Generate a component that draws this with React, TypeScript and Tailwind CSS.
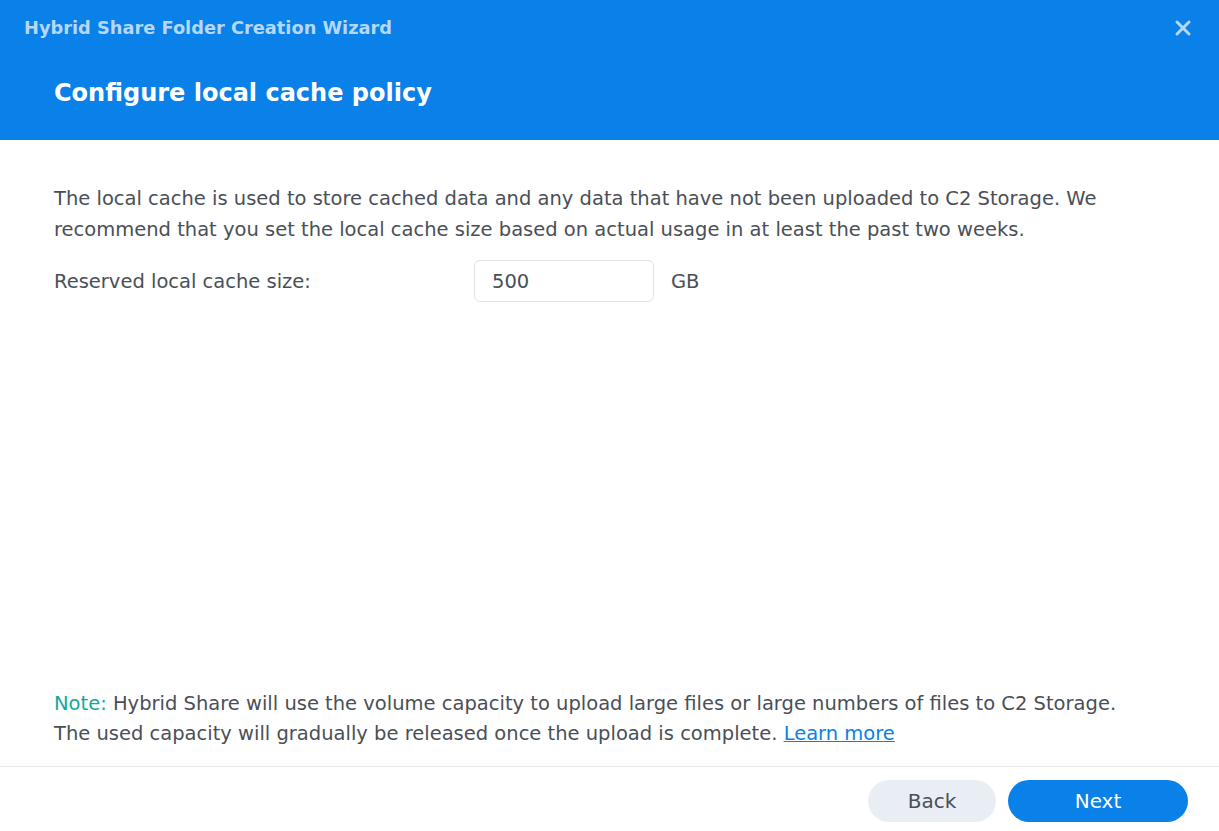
import { X } from 'lucide-react'

export default function App() {
  return (
    <div
      className="flex h-[831px] w-[1219px] flex-col bg-white text-[#4a4f57]"
      style={{ fontFamily: '"DejaVu Sans", Verdana, sans-serif' }}
    >
      {/* Header */}
      <div className="flex h-[140px] shrink-0 flex-col bg-[#0a80e9] px-6">
        <div className="flex h-[56px] items-center justify-between">
          <span className="text-[17.8px] font-bold text-[#b5d8f8]">Hybrid Share Folder Creation Wizard</span>
          <X className="h-6 w-6 text-[#b5d8f8]" strokeWidth={3} />
        </div>
        <h1 className="mt-[19px] pl-[30px] text-[24px] font-bold text-white">Configure local cache policy</h1>
      </div>

      {/* Body */}
      <div className="flex flex-1 flex-col px-[54px] pt-[43px] text-[19.5px] leading-[31px]">
        <p>
          The local cache is used to store cached data and any data that have not been uploaded to C2 Storage. We
          <br />
          recommend that you set the local cache size based on actual usage in at least the past two weeks.
        </p>
        <div className="mt-[15px] flex items-center">
          <span className="w-[420px]">Reserved local cache size:</span>
          <div className="flex h-[42px] w-[180px] items-center rounded-md border border-[#dfe3e8] px-[17px]">500</div>
          <span className="ml-[17px]">GB</span>
        </div>

        <p className="mt-auto pb-[17px] leading-[30px]">
          <span className="text-[#13a89c]">Note:</span> Hybrid Share will use the volume capacity to upload large files or
          large numbers of files to C2 Storage.
          <br />
          The used capacity will gradually be released once the upload is complete.{' '}
          <a href="#" className="text-[#0a80e9] underline">Learn more</a>
        </p>
      </div>

      {/* Footer */}
      <div className="flex h-[65px] shrink-0 items-center justify-end gap-3 border-t border-[#e6e9ed] pt-1 pr-[31px]">
        <button className="h-[42px] w-[128px] rounded-full bg-[#e9eef4] text-[20px] text-[#4a4f57]">Back</button>
        <button className="h-[42px] w-[180px] rounded-full bg-[#0a80e9] text-[20px] font-medium text-white">Next</button>
      </div>
    </div>
  )
}
